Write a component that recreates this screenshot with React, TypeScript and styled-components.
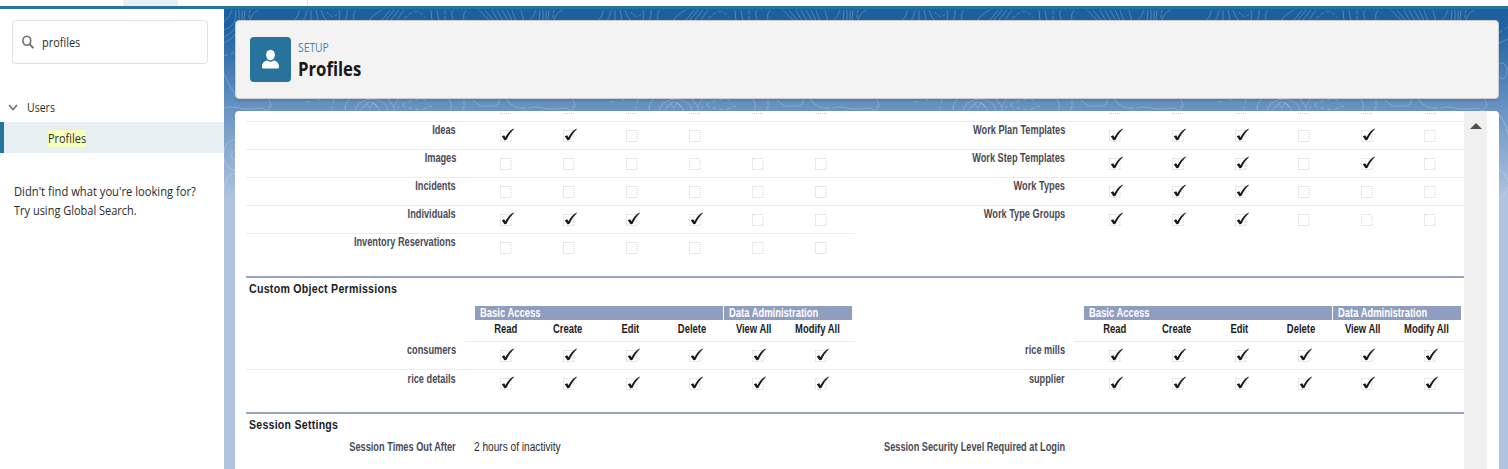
import React from 'react';
import styled, { createGlobalStyle } from 'styled-components';

const GlobalStyle = createGlobalStyle`
  * { box-sizing: border-box; }
  body { margin: 0; background: #fff; overflow: hidden; }
`;

const ui = `'Open Sans', 'Noto Sans', sans-serif`;
const classic = `'Liberation Sans', Arial, sans-serif`;

const Page = styled.div`
  display: flex;
  flex-direction: column;
  width: 1508px;
  height: 469px;
  overflow: hidden;
  background: #fff;
`;

const TabStrip = styled.div`
  display: flex;
  height: 9px;
  flex: none;
  border-bottom: 3px solid #2574a0;
`;

const ActiveTab = styled.div`
  width: 55px;
  margin-left: 123px;
  background: #e8eff3;
`;

const TabDivider = styled.div`
  width: 130px;
  border-right: 1px solid #e0e0e0;
`;

const Body = styled.div`
  display: flex;
  flex: 1;
  min-height: 0;
`;

const Sidebar = styled.aside`
  width: 224px;
  flex: none;
  padding-top: 11px;
  font-family: ${ui};
  font-size: 13px;
  color: #2b2b2b;
`;

const Squeeze = styled.span<{ $x: number; $right?: boolean; $center?: boolean }>`
  display: inline-block;
  white-space: nowrap;
  transform: scaleX(${(p) => p.$x});
  transform-origin: ${(p) => (p.$right ? 'right' : p.$center ? 'center' : 'left')} center;
`;

const SearchBox = styled.div`
  display: flex;
  align-items: center;
  width: 196px;
  height: 44px;
  margin-left: 12px;
  padding: 0 0 1px 9px;
  gap: 8px;
  border: 1px solid #e2e1e0;
  border-radius: 4px;
`;

const TreeParent = styled.div`
  display: flex;
  align-items: center;
  gap: 9px;
  height: 30px;
  margin-top: 28px;
  padding-left: 8px;
`;

const TreeItem = styled.div`
  display: flex;
  align-items: center;
  height: 31px;
  padding: 1px 0 0 44px;
  border-left: 4px solid #2574a0;
  background: #e8eff3;
`;

const Mark = styled(Squeeze)`
  line-height: 17px;
  background: #faffbd;
`;

const Hint = styled.p`
  margin: 29px 0 0 14px;
  line-height: 19px;
`;

const Main = styled.main`
  position: relative;
  flex: 1;
  min-width: 0;
  display: flex;
  flex-direction: column;
  padding: 11px 9px 0 11px;
  background: linear-gradient(#1b5f9e 0, #1f62a2 18px, #6a95c4 102px, #b0c4df 190px);
`;

const Contours = styled.svg`
  position: absolute;
  left: 0;
  top: 0;
`;

const HeaderCard = styled.header`
  position: relative;
  display: flex;
  align-items: center;
  flex: none;
  height: 79px;
  padding: 0 14px 0 14px;
  gap: 7px;
  background: #f3f3f3;
  border: 1px solid #cfcdcb;
  border-radius: 4px;
  box-shadow: 0 2px 2px rgba(0, 0, 0, 0.1);
`;

const IconTile = styled.div`
  display: flex;
  align-items: center;
  justify-content: center;
  width: 41px;
  height: 45px;
  border-radius: 4px;
  background: #28739e;
`;

const Titles = styled.div`
  display: flex;
  flex-direction: column;
  padding-top: 2px;
  font-family: ${ui};
  color: #181818;
`;

const Eyebrow = styled.div`
  font-size: 12px;
  line-height: 17px;
  color: #3c87b8;
`;

const Title = styled.h1`
  margin: 0;
  font-size: 19px;
  line-height: 27px;
  font-weight: 700;
`;

const Card = styled.section`
  position: relative;
  display: flex;
  flex: 1;
  min-height: 0;
  margin-top: 12px;
  padding-left: 11px;
  border-radius: 4px 4px 0 0;
  background: #fff;
  overflow: hidden;
`;

const Content = styled.div`
  width: 1218px;
  flex: none;
  font-family: ${classic};
  font-size: 12px;
  color: #4a4a56;
`;

const Scrollbar = styled.div`
  display: flex;
  justify-content: center;
  width: 23px;
  height: 100%;
  padding-top: 12px;
  background: #f0f0f0;
`;

const Row = styled.div<{ $h?: number }>`
  display: grid;
  grid-template-columns: 609px 609px;
  height: ${(p) => p.$h ?? 28.1}px;
`;

const Half = styled.div<{ $line?: boolean }>`
  display: grid;
  grid-template-columns: 219px 1fr;
  box-shadow: ${(p) => (p.$line ? 'inset 0 -1px 0 #ececec' : 'none')};
`;

const Label = styled.div<{ $top?: number }>`
  display: flex;
  justify-content: flex-end;
  align-items: flex-start;
  min-width: 0;
  padding: ${(p) => p.$top ?? 1.5}px 9px 0 0;
  font-size: 12px;
  font-weight: 700;
  line-height: 14px;
`;

const Checks = styled.div`
  display: grid;
  grid-template-columns: repeat(6, 63.1px);
  justify-items: center;
  align-content: start;
  padding: 4px 0 0 9px;
`;

const Peek = styled.div`
  display: grid;
  grid-template-columns: 609px 609px;
  height: 10.5px;
  box-shadow: inset 0 -1px 0 #ececec;
`;

const PeekCells = styled.div`
  display: grid;
  grid-template-columns: repeat(6, 63.1px);
  justify-items: center;
  padding-left: 228px;
`;

const PeekEdge = styled.div`
  width: 11px;
  height: 3px;
  border-bottom: 1px dotted #cfcfcf;
`;

const Section = styled.section<{ $gap: number; $h: number }>`
  margin-top: ${(p) => p.$gap}px;
  height: ${(p) => p.$h}px;
  border-top: 2px solid #97a5c8;
`;

const SectionTitle = styled.h3`
  margin: 0;
  padding: 4px 0 0 3px;
  font-size: 12.5px;
  line-height: 15px;
  font-weight: 700;
  letter-spacing: 0.3px;
  color: #1c1c1f;
`;

const HeadRow = styled.div`
  display: grid;
  grid-template-columns: 609px 609px;
  height: 36px;
  margin-top: 9px;
`;

const HeadBlock = styled.div`
  margin-left: 219px;
  padding-left: 10px;
  border-bottom: 1px solid #ececec;
`;

const Bands = styled.div`
  display: grid;
  grid-template-columns: 248px 128px;
  gap: 1px;
  height: 14px;
`;

const Band = styled.div`
  padding-left: 5px;
  background: #8f9dc0;
  color: #fff;
  font-weight: 700;
  font-size: 12px;
  line-height: 14px;
`;

const Columns = styled.div`
  display: grid;
  grid-template-columns: 62px 62px 62px 62px 61px 67px;
  justify-items: center;
  padding-top: 2px;
  font-size: 12px;
  line-height: 14px;
  font-weight: 700;
  color: #1c1c1c;
`;

const Value = styled.div`
  padding: 6px 0 0 9px;
  line-height: 16px;
  font-size: 12.5px;
  color: #2a2a2a;
`;

const Check = ({ state }: { state: string }) => (
  <svg width="18" height="18" viewBox="0 0 18 18">
    {state !== ' ' && (
      <rect x="3.5" y="4.5" width="10.5" height="11" fill="none" stroke="#d2d2d2" strokeWidth="1" strokeDasharray="1 1" />
    )}
    {state === 'x' && (
      <path d="M4.8 10.2 L7.2 9.2 L8.5 11.2 C10.3 7.6 12.8 4.4 16.5 2.4 L16.8 3.2 C13.8 6 11.4 9.8 9.4 14 L7.4 14.2 Z" fill="#1c1c1c" />
    )}
  </svg>
);

const Cells = ({ label, checks }: { label: string; checks: string }) => (
  <>
    <Label><Squeeze $x={0.767} $right>{label}</Squeeze></Label>
    <Checks>{checks.split('').map((c, i) => <Check key={i} state={c} />)}</Checks>
  </>
);

const standard: [string, string, string, string][] = [
  ['Ideas', 'xx..  ', 'Work Plan Templates', 'xxx.x.'],
  ['Images', '......', 'Work Step Templates', 'xxx.x.'],
  ['Incidents', '......', 'Work Types', 'xxx...'],
  ['Individuals', 'xxxx..', 'Work Type Groups', 'xxx...'],
  ['Inventory Reservations', '......', '', ''],
];

const custom: [string, string][] = [
  ['consumers', 'rice mills'],
  ['rice details', 'supplier'],
];

const HeadGroup = () => (
  <HeadBlock>
    <Bands>
      <Band><Squeeze $x={0.785}>Basic Access</Squeeze></Band>
      <Band><Squeeze $x={0.785}>Data Administration</Squeeze></Band>
    </Bands>
    <Columns>
      {['Read', 'Create', 'Edit', 'Delete', 'View All', 'Modify All'].map((c) => (
        <Squeeze key={c} $x={0.785} $center>{c}</Squeeze>
      ))}
    </Columns>
  </HeadBlock>
);

const Topography = () => (
  <Contours width="1284" height="200">
    <defs>
      <pattern id="topo" width="304" height="200" patternUnits="userSpaceOnUse">
        <g fill="none" stroke="#fff" strokeOpacity="0.22" strokeWidth="1">
          <path d="M8 1Q6 8 0 13M12 1L11 12M15 1V11M18 1V11M21 1L20 11M34 1Q27 5 26 12M0 21Q8 18 11 12M0 28Q9 24 13 15M0 34Q8 31 14 22" />
          <path d="M26 1L24 12" strokeDasharray="3 2" />
          <path d="M75 1Q75 7 70 12M83 1Q82 8 79 12M87 1V12M92 1L94 12M97 1Q99 8 103 12M115 1Q117 6 115 12M123 1Q124 7 121 12M131 1Q128 6 130 12" />
          <path d="M103 3Q109 12 115 3" strokeDasharray="3 2" />
          <path d="M158 1Q149 5 145 12M166 1L157 12M170 1L161 12M175 1L166 12M180 1L172 12M207 1L208 12M213 1L215 12M229 1Q226 6 230 12M242 1Q238 6 240 12" />
          <path d="M180 10Q193 -4 201 9M221 1V12" strokeDasharray="4 2" />
          <path d="M255 1L266 12M261 1L270 12M268 1L274 12M273 1L279 12M278 1L284 12M283 1L288 12M288 1L292 12M297 1L300 12" />
          <path d="M0 99Q8 97 15 99T39 99Q43 106 47 96L45 90M0 64Q4 76 12 86M59 34Q62 33 68 30M59 55C66 51 68 60 66 67Q63 72 59 68M59 105Q65 112 68 126" />
          <path d="M0 47L12 43M59 24L70 16M82 92L87 94M93 90L97 92M110 90L107 102" strokeDasharray="4 3" />
          <path d="M126 90Q119 96 122 103M131 103C132 86 164 86 164 103M137 103C139 92 150 88 156 103M140 99L143 95L146 99L149 94L154 98M164 90L170 98L174 90M170 98V103M225 90Q229 97 226 103M240 90Q241 98 238 103" />
          <path d="M173 100Q185 88 204 91M178 96Q194 104 208 97" strokeDasharray="4 3" />
          <path d="M249 91L256 97H270Q276 96 276 90M282 90Q290 101 302 99" />
          <path d="M13 130C-5 131-5 160 13 162M13 140Q2 146 12 152M0 180Q2 163 12 164M59 160Q65 164 68 172M59 190Q64 188 68 178" />
        </g>
      </pattern>
    </defs>
    <rect width="1284" height="200" fill="url(#topo)" />
  </Contours>
);

export default function App() {
  return (
    <>
      <GlobalStyle />
      <Page>
        <TabStrip><ActiveTab /><TabDivider /></TabStrip>
        <Body>
          <Sidebar>
            <SearchBox>
              <svg width="12" height="14" viewBox="0 0 12 14" fill="none" stroke="#706e6b" strokeWidth="1.6">
                <ellipse cx="4.8" cy="5.7" rx="3.9" ry="4.5" />
                <path d="M7.6 9.2L11.4 13.2" strokeWidth="1.9" />
              </svg>
              <Squeeze $x={0.84}>profiles</Squeeze>
            </SearchBox>
            <TreeParent>
              <svg width="10" height="7" viewBox="0 0 10 7" fill="none" stroke="#706e6b" strokeWidth="1.5">
                <path d="M1 1L5 5.6L9 1" />
              </svg>
              <Squeeze $x={0.81}>Users</Squeeze>
            </TreeParent>
            <TreeItem><Mark $x={0.84}>Profiles</Mark></TreeItem>
            <Hint>
              <Squeeze $x={0.86}>Didn't find what you're looking for?</Squeeze>
              <br />
              <Squeeze $x={0.845}>Try using Global Search.</Squeeze>
            </Hint>
          </Sidebar>
          <Main>
            <Topography />
            <HeaderCard>
              <IconTile>
                <svg width="19" height="21" viewBox="0 0 19 21" fill="#fff">
                  <ellipse cx="9.5" cy="6" rx="4.4" ry="5.2" />
                  <path d="M1 18.2C.8 14 3 12.4 6.4 11.6Q9.5 14 12.6 11.6C16 12.4 18.2 14 18 18.2Q18 19.4 16.6 19.4H2.4Q1 19.4 1 18.2Z" />
                </svg>
              </IconTile>
              <Titles>
                <Eyebrow><Squeeze $x={0.86}>SETUP</Squeeze></Eyebrow>
                <Title><Squeeze $x={0.88}>Profiles</Squeeze></Title>
              </Titles>
            </HeaderCard>
            <Card>
              <Content>
                <Peek>
                  {[0, 1].map((h) => (
                    <PeekCells key={h}>{[0, 1, 2, 3, 4, 5].map((i) => <PeekEdge key={i} />)}</PeekCells>
                  ))}
                </Peek>
                {standard.map(([l, lc, r, rc], i) => (
                  <Row key={l}>
                    <Half $line={i < 4}><Cells label={l} checks={lc} /></Half>
                    <Half $line={i < 3}>{r && <Cells label={r} checks={rc} />}</Half>
                  </Row>
                ))}
                <Section $gap={14} $h={136.5}>
                  <SectionTitle><Squeeze $x={0.85}>Custom Object Permissions</Squeeze></SectionTitle>
                  <HeadRow><HeadGroup /><HeadGroup /></HeadRow>
                  {custom.map(([l, r], i) => (
                    <Row key={l}>
                      <Half $line={i === 0}><Cells label={l} checks="xxxxxx" /></Half>
                      <Half $line={i === 0}><Cells label={r} checks="xxxxxx" /></Half>
                    </Row>
                  ))}
                </Section>
                <Section $gap={0} $h={60}>
                  <SectionTitle><Squeeze $x={0.845}>Session Settings</Squeeze></SectionTitle>
                  <Row $h={36}>
                    <Half>
                      <Label $top={6.5}><Squeeze $x={0.767} $right>Session Times Out After</Squeeze></Label>
                      <Value><Squeeze $x={0.81}>2 hours of inactivity</Squeeze></Value>
                    </Half>
                    <Half>
                      <Label $top={6.5}><Squeeze $x={0.767} $right>Session Security Level Required at Login</Squeeze></Label>
                    </Half>
                  </Row>
                </Section>
              </Content>
              <Scrollbar>
                <svg width="12" height="6" viewBox="0 0 12 6"><path d="M0 6L6 0L12 6Z" fill="#505050" /></svg>
              </Scrollbar>
            </Card>
          </Main>
        </Body>
      </Page>
    </>
  );
}
